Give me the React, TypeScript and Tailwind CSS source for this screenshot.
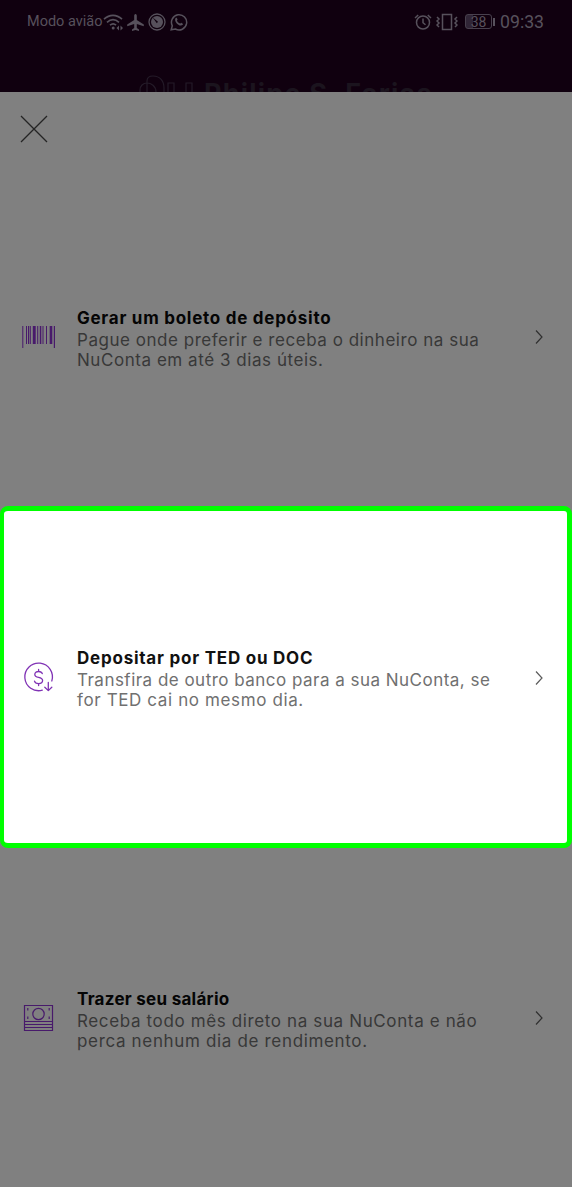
import React from "react";

type Line = { text: string; spacing: string };
type Option = { title: Line; lines: Line[]; icon: React.ReactNode; height: string; frame: string; body: string };

const Barcode = () => (
  <svg className="mt-px" width="34" height="24" viewBox="0 0 34 24" fill="#481a6b">
    <path d="M.3 1h1v22h-1zM4 1h1v18H4zM6 1h1.300v18H6zM8 1h.8v18H8zM10.800 1h2.900v18h-2.900zM15.200 1h1v18h-1zM17.800 1h1.500v18h-1.500zM20.500 1h1v18h-1zM24 1h1v18h-1zM27.700 1h2.600v18h-2.600zM31.800 1h1.200v22h-1.200z" />
  </svg>
);

const Coin = () => (
  <svg className="mt-[2px]" width="34" height="34" viewBox="0 0 34 34" fill="none" stroke="#8033b5" strokeWidth="1.300" strokeLinecap="round" strokeLinejoin="round">
    <path d="M20.300 29.200A13.800 13.800 0 1 1 29.800 20" />
    <path d="M20.300 12.600c-.5-1.400-1.800-2.100-3.700-2.100-2.300 0-3.800 1.100-3.800 2.900 0 1.900 1.500 2.500 3.800 3 2.400.5 4 1.200 4 3.200 0 1.900-1.600 3-4 3-2.200 0-3.700-.9-4.100-2.500M16.600 8.500v2M16.600 22.600v2" />
    <path d="M26.300 21.500v8M22.800 26.200l3.500 3.400 3.500-3.400" />
  </svg>
);

const Cash = () => (
  <svg width="34" height="28" viewBox="0 0 34 28" fill="none" stroke="#481a6b" strokeWidth="1.200">
    <path d="M2.500 1.500h28v25h-28zM2.500 17.500h28M2.500 20.500h28M2.500 23.500h28" />
    <circle cx="16.500" cy="10" r="5.700" />
    <path d="M5.800 4v2.500M5.800 12.500V15M27.200 4v2.500M27.200 12.500V15" />
  </svg>
);

const options: Option[] = [
  {
    title: { text: "Gerar um boleto de depósito", spacing: "tracking-[0.740px]" },
    lines: [
      { text: "Pague onde preferir e receba o dinheiro na sua", spacing: "tracking-[0.530px]" },
      { text: "NuConta em até 3 dias úteis.", spacing: "tracking-[0.550px]" },
    ],
    icon: <Barcode />,
    height: "h-[340px]",
    frame: "",
    body: "pt-[6px] text-[#383838]",
  },
  {
    title: { text: "Depositar por TED ou DOC", spacing: "tracking-[0.770px]" },
    lines: [
      { text: "Transfira de outro banco para a sua NuConta, se", spacing: "tracking-[0.480px]" },
      { text: "for TED cai no mesmo dia.", spacing: "tracking-[0.620px]" },
    ],
    icon: <Coin />,
    height: "h-[342px]",
    frame: "rounded-lg border-[5px] border-l-4 border-[#00ff00] bg-white",
    body: "pt-[3px] text-[#707070]",
  },
  {
    title: { text: "Trazer seu salário", spacing: "tracking-[0.270px]" },
    lines: [
      { text: "Receba todo mês direto na sua NuConta e não", spacing: "tracking-[0.630px]" },
      { text: "perca nenhum dia de rendimento.", spacing: "tracking-[0.660px]" },
    ],
    icon: <Cash />,
    height: "h-[339px]",
    frame: "",
    body: "pt-[5px] text-[#383838]",
  },
];

function OptionRow({ option, highlighted }: { option: Option; highlighted: boolean }) {
  return (
    <button className={`flex w-full shrink-0 items-center text-left ${option.height} ${option.frame}`}>
      <span className={`flex w-[34px] shrink-0 justify-center ${highlighted ? "ml-[18px]" : "ml-[22px]"}`}>{option.icon}</span>
      <span className={`ml-[21px] flex-1 text-[17px] leading-5 ${option.body}`}>
        <span className={`block h-[22px] whitespace-nowrap font-bold ${highlighted ? "text-[#111111]" : "text-[#050505]"} ${option.title.spacing}`}>
          {option.title.text}
        </span>
        {option.lines.map((line) => (
          <span key={line.text} className={`block h-5 whitespace-nowrap ${line.spacing}`}>{line.text}</span>
        ))}
      </span>
      <svg className={`mt-px shrink-0 ${highlighted ? "mr-[23px]" : "mr-[28px]"}`} width="10" height="16" viewBox="0 0 10 16" fill="none" stroke={highlighted ? "#5b5b5b" : "#303030"} strokeWidth="1.200">
        <path d="M2 1.500 8 8l-6 6.500" />
      </svg>
    </button>
  );
}

function StatusBar() {
  return (
    <div className="flex h-11 items-center justify-between pl-[27px] pr-7 font-['Roboto',sans-serif] text-[#57515c]">
      <div className="flex items-center">
        <span className="w-[76px] whitespace-nowrap text-[14.500px]">Modo avião</span>
        <svg width="22" height="18" viewBox="0 0 22 18" fill="none" stroke="currentColor" strokeWidth="1.700">
          <path d="M1 6.200c5.500-5 12.500-5 18 0M4 9.300c3.700-3.300 8.300-3.300 12 0M7 12.200c2-1.700 4.300-1.700 6 0" />
          <circle cx="10.200" cy="15" r="1.500" fill="currentColor" stroke="none" />
          <path d="m16 12.500-2.500 2.500 2.500 2.500zM17.500 12.500 20 15l-2.500 2.500z" fill="currentColor" stroke="none" />
        </svg>
        <svg className="ml-[2px]" width="17" height="17" viewBox="0 0 17 17" fill="currentColor">
          <path d="M8.500 0c1 0 1.300 1 1.300 2v4l7 4.500v1.700L9.800 10v4l2.200 1.600V17l-3.500-1L5 17v-1.400L7.200 14v-4L.2 12.200v-1.700l7-4.500V2c0-1 .3-2 1.300-2Z" />
        </svg>
        <svg className="ml-1" width="18" height="18" viewBox="0 0 18 18">
          <circle cx="9" cy="9" r="8" fill="none" stroke="currentColor" strokeWidth="1.300" />
          <circle cx="9" cy="9" r="6" fill="currentColor" />
          <path d="m4.500 4.300 5.500 4.500-1.200 1.400Z" fill="#10000f" />
        </svg>
        <svg className="ml-1" width="18" height="18" viewBox="0 0 18 18" fill="none" stroke="currentColor" strokeWidth="1.500">
          <path d="m1.200 16.800 1.100-4A7.600 7.600 0 1 1 5.400 16Z" />
          <path d="M5.500 5.200c.8-.9 1.500-.4 2 1.100.2.700-.7 1-.5 1.500.7 1.300 1.600 2.200 3 2.800.6.200.9-1 1.500-.7 1.500.7 1.900 1.100 1.200 1.900-3 3-9.200-3.400-7.200-6.600Z" fill="currentColor" stroke="none" />
        </svg>
      </div>
      <div className="flex items-center">
        <svg width="18" height="18" viewBox="0 0 18 18" fill="none" stroke="currentColor" strokeWidth="1.500">
          <circle cx="9" cy="9.500" r="6.500" /><path d="M9 5.500v4.200l2.500 2.100M1 5l3.200-3M17 5l-3.200-3" />
        </svg>
        <svg className="ml-1" width="22" height="18" viewBox="0 0 22 18" fill="none" stroke="currentColor" strokeWidth="1.500">
          <path d="M6.500 1.500h9v15h-9z" />
          <path d="m1 4 2 2-2 2 2 2-2 2 2 2M21 4l-2 2 2 2-2 2 2 2-2 2" />
        </svg>
        <span className="ml-[7px] flex h-[15px] w-[27px] items-center justify-center rounded-[3px] border border-[#48404d] bg-linear-to-r from-[#302536] from-30% to-transparent to-30% text-[14px] leading-none">38</span>
        <span className="ml-px h-2 w-[2px] bg-current" />
        <span className="ml-[5px] w-[44px] whitespace-nowrap text-[17.700px]">09:33</span>
      </div>
    </div>
  );
}

export default function App() {
  return (
    <main className="flex h-[1187px] w-[572px] flex-col overflow-hidden bg-[#808080] font-['Inter',sans-serif]">
      <header className="h-[92px] shrink-0 overflow-hidden bg-[#10000f]">
        <StatusBar />
        <div className="flex h-12 items-start overflow-hidden pl-[138px] pt-[30px]">
          <svg className="shrink-0" width="56" height="36" viewBox="0 0 56 36" fill="none" stroke="#241a28" strokeWidth="1.200">
            <path d="M2 36V16c0-4 3-7 7-7s9 3 9 9v18M9 20V7c0-4 3-5 6-5 7 0 11 5 11 12v22M30 36V9h6v27M48 36V9h6v27" />
          </svg>
          <span className="ml-[10px] mt-[5px] whitespace-nowrap text-[27px] font-bold leading-[30px] tracking-[1.200px] text-[#1b141e]">Philipe S. Farias</span>
        </div>
      </header>
      <div className="flex h-[74px] shrink-0 items-center pl-5">
        <button aria-label="Fechar">
          <svg width="28" height="28" viewBox="0 0 28 28" fill="none" stroke="#242424" strokeWidth="1.300">
            <path d="m1 1 26 26M27 1 1 27" />
          </svg>
        </button>
      </div>
      {options.map((option, index) => (
        <OptionRow key={option.title.text} option={option} highlighted={index === 1} />
      ))}
    </main>
  );
}
